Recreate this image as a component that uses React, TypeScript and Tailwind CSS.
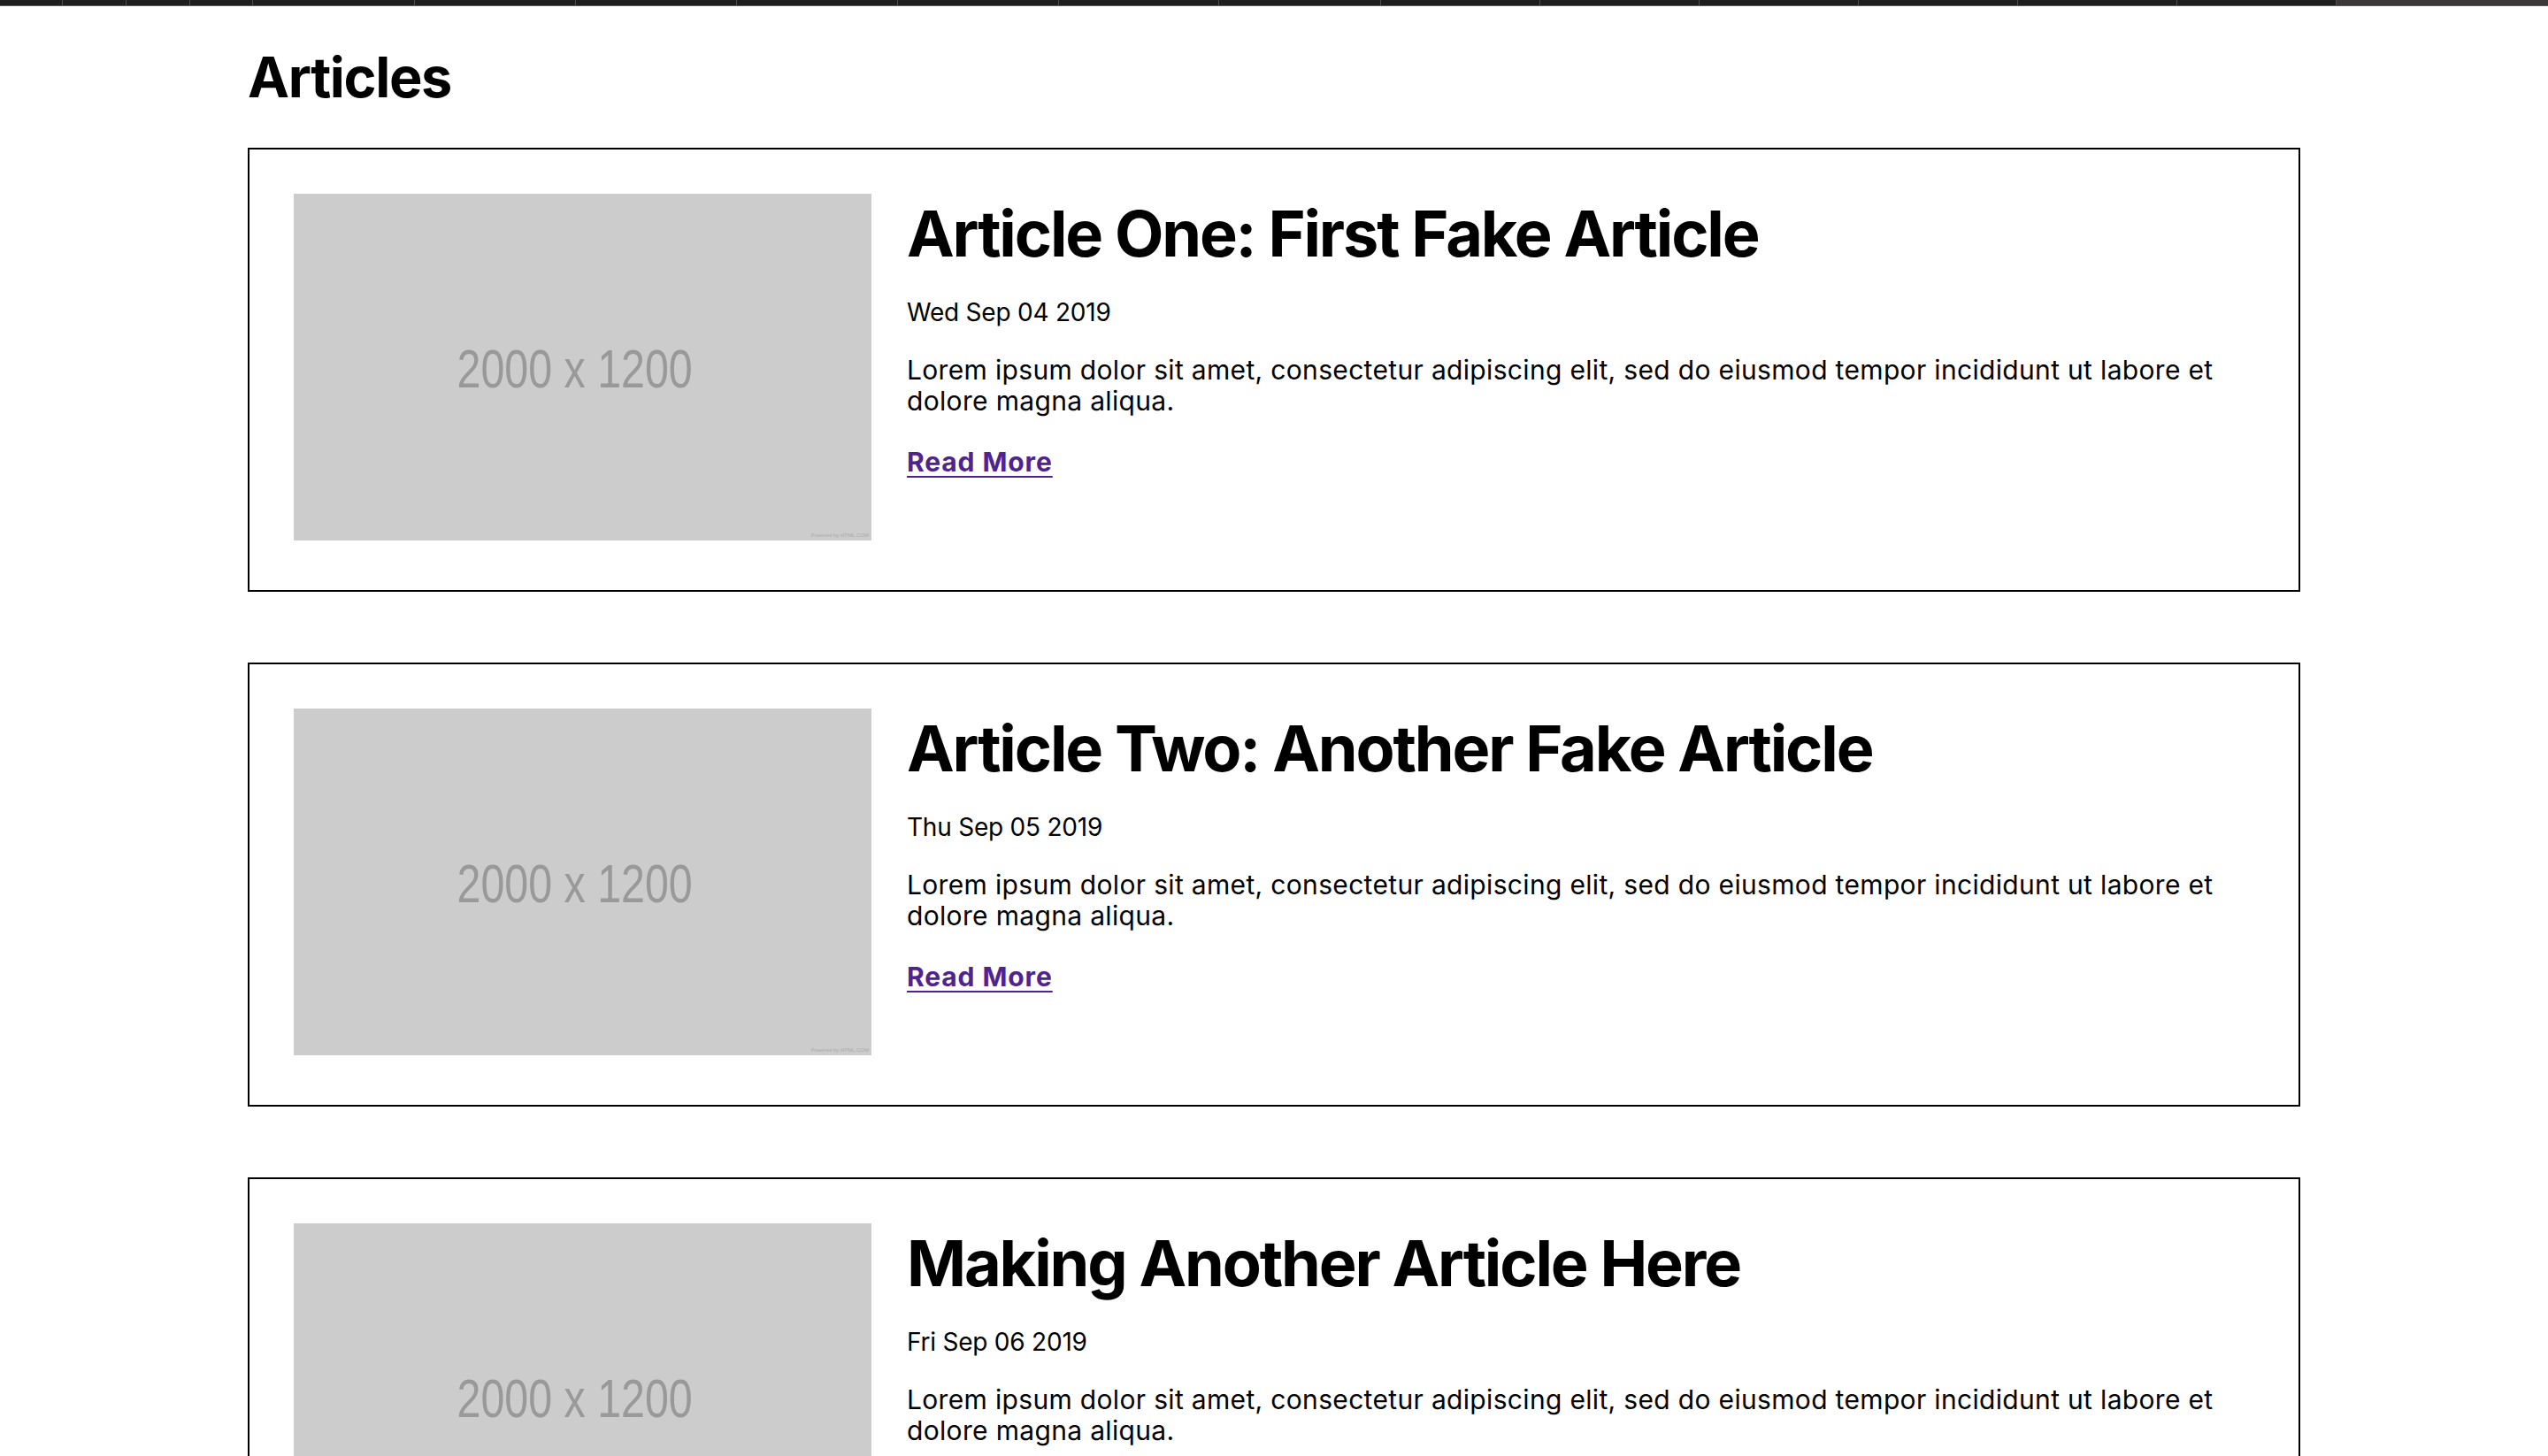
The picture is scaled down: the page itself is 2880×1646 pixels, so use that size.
import React from "react";

const tabs = [71, 72, 72, 71, 183, 182, 182, 182, 182, 181, 183, 180, 180, 180, 180, 180, 180];

const articles = [
  { title: "Article One: First Fake Article", date: "Wed Sep 04 2019" },
  { title: "Article Two: Another Fake Article", date: "Thu Sep 05 2019" },
  { title: "Making Another Article Here", date: "Fri Sep 06 2019" },
];

const lorem =
  "Lorem ipsum dolor sit amet, consectetur adipiscing elit, sed do eiusmod tempor incididunt ut labore et dolore magna aliqua.";

function Placeholder() {
  return (
    <div className="relative flex h-[392px] w-[653px] shrink-0 items-center justify-center bg-[#cccccc]">
      <span className="mr-[18px] mt-[4px] inline-block scale-x-[0.78] font-['Liberation_Sans',sans-serif] text-[62px] leading-none text-[#999999]">
        2000 x 1200
      </span>
      <span className="absolute bottom-[3px] right-[3px] font-['Liberation_Sans',sans-serif] text-[6px] leading-none text-[#aaaaaa]">
        Powered by HTML.COM
      </span>
    </div>
  );
}

function ArticleCard({ title, date }: { title: string; date: string }) {
  return (
    <div className="flex gap-[40px] border-2 border-black px-[50px] pt-[50px] pb-[56px]">
      <Placeholder />
      <div className="flex flex-col pt-[2px]">
        <h2 className="text-[72px] font-bold leading-[86px] tracking-[-0.03em] text-black">{title}</h2>
        <p className="mt-[29px] text-[28px] leading-[34px] tracking-[-0.008em] text-black">{date}</p>
        <p className="mt-[31px] text-[30px] leading-[35px] tracking-[0.011em] text-black">{lorem}</p>
        <a
          href="#"
          className="mt-[34px] self-start text-[30px] font-bold leading-[35px] tracking-[0.03em] text-[#4f2390] underline decoration-2 underline-offset-[5px]"
        >
          Read More
        </a>
      </div>
    </div>
  );
}

export default function App() {
  return (
    <div className="min-h-screen bg-white font-['Inter','Noto_Sans',sans-serif]">
      {/* tab strip */}
      <div className="flex h-[6px] bg-[#1e1e1e]">
        {tabs.map((w, i) => (
          <div key={i} className="h-full shrink-0 border-r border-[#4d4d4d]" style={{ width: w }} />
        ))}
        <div className="h-full flex-1 bg-[#3a3839]" />
      </div>
      <div className="h-px bg-[#5a5a5a]" />

      <div className="mx-[280px] pb-20">
        <h1 className="mt-[42px] text-[63px] font-bold leading-[77px] tracking-[-0.022em] text-black">Articles</h1>
        <div className="mt-[41px] flex flex-col gap-[80px]">
          {articles.map((a) => (
            <ArticleCard key={a.title} title={a.title} date={a.date} />
          ))}
        </div>
      </div>
    </div>
  );
}
